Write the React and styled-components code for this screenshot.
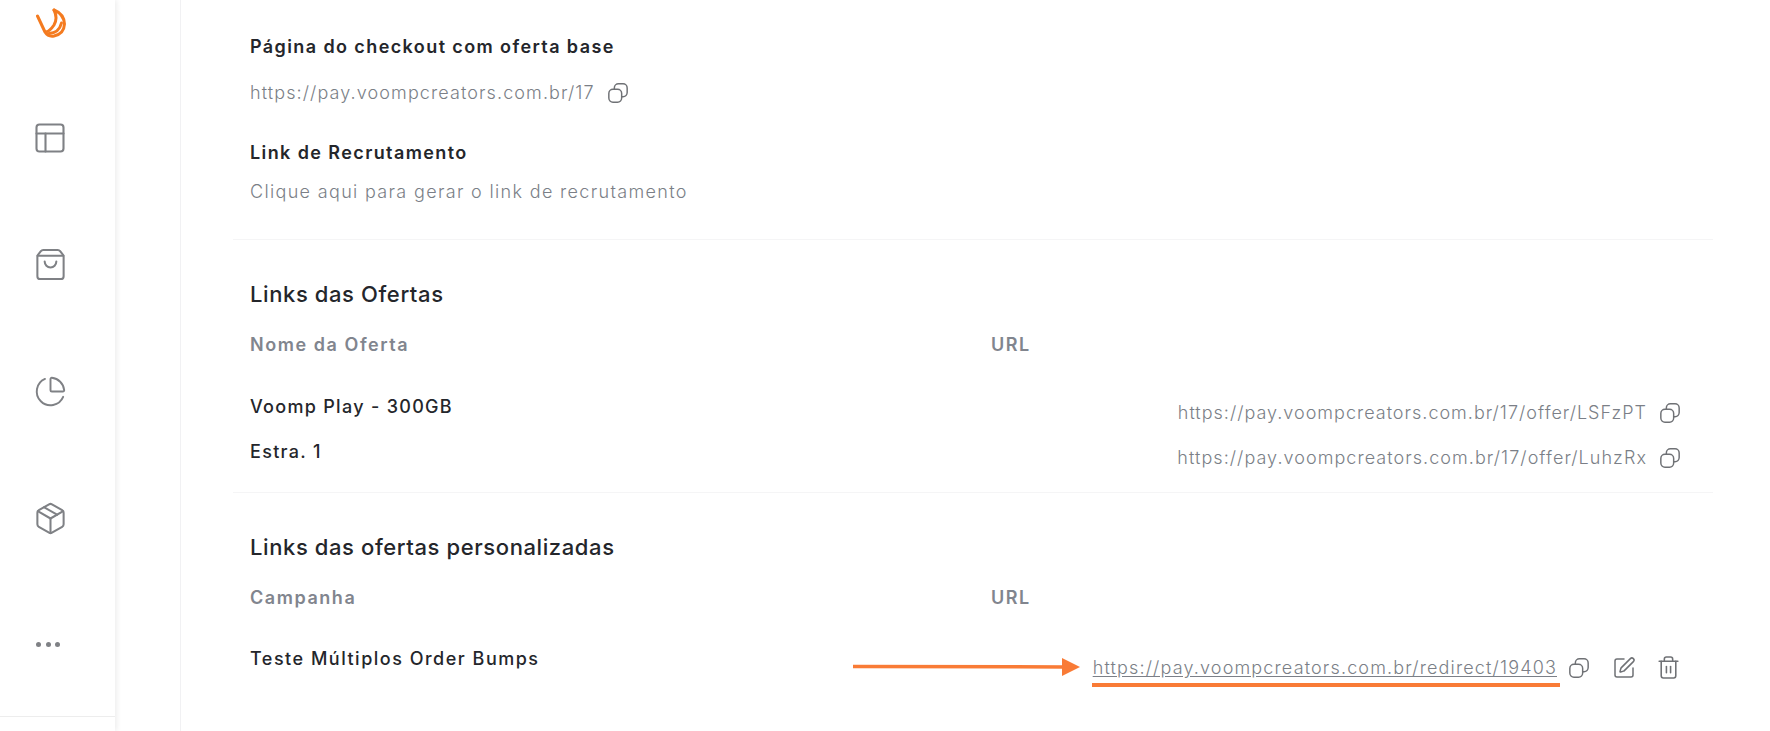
import styled, { createGlobalStyle } from "styled-components";
import { PanelsTopLeft, ShoppingBag, ChartPie, Package, SquarePen, Trash2 } from "lucide-react";

const GlobalStyle = createGlobalStyle`
  html, body {
    margin: 0;
    height: 100%;
    background: #fff;
    overflow: hidden;
  }
  body {
    font-family: Inter, "Noto Sans", sans-serif;
    color: #24262b;
  }
`;

const Page = styled.div`
  display: flex;
  height: 731px;
  overflow: hidden;
`;

const Sidebar = styled.aside`
  width: 115px;
  flex-shrink: 0;
  box-shadow: 2px 0 5px rgba(0, 0, 0, 0.07);
  display: flex;
  flex-direction: column;
  align-items: center;
  padding-right: 15px;
  box-sizing: border-box;
  position: relative;
`;

const LogoSlot = styled.div`
  height: 46px;
  flex-shrink: 0;
  margin-bottom: 74px;
  padding-left: 2px;
  display: flex;
  align-items: center;
`;

const NavItem = styled.div`
  height: 36px;
  flex-shrink: 0;
  margin-bottom: 90.7px;
  display: flex;
  align-items: center;
  justify-content: center;
  color: #7f8185;
`;

const Dots = styled.div`
  display: flex;
  gap: 4.5px;
  margin-right: 4px;
  span {
    width: 5px;
    height: 5px;
    border-radius: 50%;
    background: #7f8185;
  }
`;

const SidebarFoot = styled.div`
  position: absolute;
  left: 0;
  right: 0;
  top: 716px;
  height: 1px;
  background: #ededed;
`;

const Gutter = styled.div`
  width: 65px;
  flex-shrink: 0;
  border-right: 1px solid #f1f1f3;
`;

const Content = styled.main`
  flex: 1;
  padding: 35px 57px 0 52px;
`;

const Block = styled.section`
  padding: 0 17px;
`;

const Label = styled.div`
  font-size: 18px;
  line-height: 24px;
  font-weight: 600;
  letter-spacing: 1.4px;
  color: #24262b;
  margin-top: ${(p) => p.$top || 0}px;
`;

const Muted = styled.div`
  display: flex;
  align-items: center;
  font-size: 18px;
  line-height: 24px;
  font-weight: 300;
  letter-spacing: ${(p) => p.$spacing || 1.1}px;
  color: #7b7f87;
  margin-top: ${(p) => p.$top || 0}px;
`;

const Divider = styled.hr`
  border: 0;
  height: 1px;
  background: #f5f5f6;
  margin: ${(p) => p.$top}px 0 0;
`;

const SectionTitle = styled.h2`
  margin: ${(p) => p.$top}px 0 0;
  font-size: 22px;
  line-height: 28px;
  font-weight: 500;
  letter-spacing: 0.6px;
  color: #24262b;
`;

const HeadRow = styled.div`
  display: grid;
  grid-template-columns: 741px 1fr;
  margin-top: 25px;
  font-size: 18px;
  line-height: 24px;
  font-weight: 600;
  letter-spacing: 1.55px;
  color: #81858e;
`;

const Row = styled.div`
  display: flex;
  justify-content: space-between;
  align-items: flex-start;
  margin-top: ${(p) => p.$top}px;
  position: relative;
`;

const Name = styled.div`
  font-size: 18px;
  line-height: 24px;
  font-weight: 500;
  letter-spacing: ${(p) => p.$spacing || 1.3}px;
  color: #24262b;
`;

const LinkCell = styled.div`
  display: flex;
  align-items: center;
  padding-top: ${(p) => p.$top || 6}px;
  padding-right: 15px;
  font-size: 18px;
  line-height: 24px;
  font-weight: 300;
  letter-spacing: ${(p) => p.$spacing || 1.05}px;
  color: #7b7f87;
`;

const Url = styled.a`
  position: relative;
  color: #7b7f87;
  text-decoration: underline;
  text-underline-offset: 2px;
`;

const Highlight = styled.span`
  position: absolute;
  left: -1px;
  right: -3px;
  bottom: -7px;
  height: 4px;
  background: #f97b36;
`;

const Arrow = styled.svg`
  position: absolute;
  left: 603px;
  top: 11px;
`;

const CopySvg = styled.svg`
  margin-left: ${(p) => p.$gap}px;
  color: #6f7175;
  flex-shrink: 0;
`;

const ActionIcon = styled.span`
  display: flex;
  margin-left: ${(p) => p.$gap}px;
  color: #6f7175;
`;

const CopyIcon = ({ gap }) => (
  <CopySvg $gap={gap} width="22" height="22" viewBox="0 0 24 24" fill="none" stroke="currentColor" strokeWidth="1.6" strokeLinecap="round" strokeLinejoin="round">
    <rect x="2" y="8" width="14" height="14" rx="4.5" />
    <path d="M8 8V6.5A4.5 4.5 0 0 1 12.5 2h5A4.5 4.5 0 0 1 22 6.5v5a4.5 4.5 0 0 1-4.5 4.5H16" />
  </CopySvg>
);

const Logo = () => (
  <svg width="30" height="32" viewBox="0 0 30 30" fill="none" stroke="#f47b20" strokeWidth="3" strokeLinecap="round" strokeLinejoin="round">
    <path d="M1.5 8 L9 24 Q12 29 18 28 Q28 26 28.5 16 Q28 6 18 2" />
    <path d="M18 2 Q22 10 18 17 Q14 23 10 24" />
    <path d="M13 25.5 Q23 25 25.5 15" />
  </svg>
);

const navIcons = [
  { Icon: PanelsTopLeft, size: 36 },
  { Icon: ShoppingBag, size: 35 },
  { Icon: ChartPie, size: 33 },
  { Icon: Package, size: 35 },
];

const App = () => {
  return (
    <>
      <GlobalStyle />
      <Page>
        <Sidebar>
          <LogoSlot>
            <Logo />
          </LogoSlot>
          {navIcons.map(({ Icon, size }, i) => (
            <NavItem key={i}>
              <Icon size={size} strokeWidth={1.4} />
            </NavItem>
          ))}
          <NavItem>
            <Dots>
              <span />
              <span />
              <span />
            </Dots>
          </NavItem>
          <SidebarFoot />
        </Sidebar>
        <Gutter />
        <Content>
          <Block>
            <Label>Página do checkout com oferta base</Label>
            <Muted $top={22}>
              https://pay.voompcreators.com.br/17
              <CopyIcon gap={12} />
            </Muted>
            <Label $top={36}>Link de Recrutamento</Label>
            <Muted $top={15} $spacing={1.33}>
              Clique aqui para gerar o link de recrutamento
            </Muted>
          </Block>
          <Divider $top={35} />
          <Block>
            <SectionTitle $top={40}>Links das Ofertas</SectionTitle>
            <HeadRow>
              <span>Nome da Oferta</span>
              <span>URL</span>
            </HeadRow>
            <Row $top={38}>
              <Name>Voomp Play - 300GB</Name>
              <LinkCell $spacing={1.0}>
                https://pay.voompcreators.com.br/17/offer/LSFzPT
                <CopyIcon gap={12} />
              </LinkCell>
            </Row>
            <Row $top={15}>
              <Name>Estra. 1</Name>
              <LinkCell>
                https://pay.voompcreators.com.br/17/offer/LuhzRx
                <CopyIcon gap={12} />
              </LinkCell>
            </Row>
          </Block>
          <Divider $top={22} />
          <Block>
            <SectionTitle $top={40}>Links das ofertas personalizadas</SectionTitle>
            <HeadRow>
              <span>Campanha</span>
              <span>URL</span>
            </HeadRow>
            <Row $top={37}>
              <Name $spacing={1.5}>Teste Múltiplos Order Bumps</Name>
              <Arrow width="230" height="18" viewBox="0 0 230 18">
                <path d="M0 8.4 L212 9" stroke="#f97b36" strokeWidth="3.5" fill="none" />
                <path d="M209 0 L227 9 L209 18 Z" fill="#f97b36" />
              </Arrow>
              <LinkCell $top={8} $spacing={1.15}>
                <Url>
                  https://pay.voompcreators.com.br/redirect/19403
                  <Highlight />
                </Url>
                <CopyIcon gap={11} />
                <ActionIcon $gap={22}>
                  <SquarePen size={24} strokeWidth={1.5} />
                </ActionIcon>
                <ActionIcon $gap={20}>
                  <Trash2 size={25} strokeWidth={1.5} />
                </ActionIcon>
              </LinkCell>
            </Row>
          </Block>
        </Content>
      </Page>
    </>
  );
};

export default App;
